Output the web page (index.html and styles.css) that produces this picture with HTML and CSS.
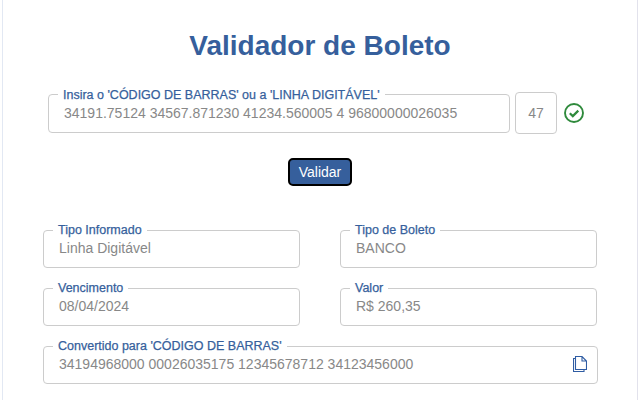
FILE: index.html
```html
<!DOCTYPE html>
<html lang="pt-BR">
<head>
<meta charset="utf-8">
<title>Validador de Boleto</title>
<link rel="stylesheet" href="styles.css">
</head>
<body>
<main class="card">
  <h1 class="title">Validador de Boleto</h1>
  <div class="entry">
    <fieldset class="field field-entry">
      <legend>Insira o 'CÓDIGO DE BARRAS' ou a 'LINHA DIGITÁVEL'</legend>
      <span class="value">34191.75124 34567.871230 41234.560005 4 96800000026035</span>
    </fieldset>
    <div class="count">47</div>
    <svg class="check" viewBox="0 0 20 20" width="20" height="20" aria-hidden="true">
      <circle cx="10" cy="10" r="9" fill="none" stroke="#2f8a3c" stroke-width="1.9"/>
      <path d="M5.8 10.2 8.8 13.1 14.3 7.6" fill="none" stroke="#2f8a3c" stroke-width="2.2"/>
    </svg>
  </div>
  <div class="actions"><button class="button" type="button">Validar</button></div>
  <div class="results">
    <fieldset class="field"><legend>Tipo Informado</legend><span class="value">Linha Digitável</span></fieldset>
    <fieldset class="field"><legend>Tipo de Boleto</legend><span class="value">BANCO</span></fieldset>
    <fieldset class="field"><legend>Vencimento</legend><span class="value">08/04/2024</span></fieldset>
    <fieldset class="field"><legend>Valor</legend><span class="value">R$ 260,35</span></fieldset>
  </div>
  <fieldset class="field field-wide">
    <legend>Convertido para 'CÓDIGO DE BARRAS'</legend>
    <div class="wide-row">
      <span class="value">34194968000 00026035175 12345678712 34123456000</span>
      <svg class="copy" viewBox="0 0 14 16" width="14" height="16" aria-hidden="true">
        <path d="M2.5 .5H9L13.5 5V13.5H2.5Z M9 .5V5H13.5" fill="none" stroke="#2f5ca3" stroke-width="1.1"/>
        <path d="M2.5 2.5H.5V15.5H11V13.5" fill="none" stroke="#2f5ca3" stroke-width="1.1"/>
      </svg>
    </div>
  </fieldset>
</main>
</body>
</html>
```
FILE: styles.css
```css
* { box-sizing: border-box; }
html, body { margin: 0; height: 100%; background: #fff; overflow: hidden; }
body { font-family: "Liberation Sans", Arial, sans-serif; }
.card {
  width: 636px;
  height: 400px;
  margin-left: 2px;
  border-left: 1px solid #e2e8f3;
  border-right: 1px solid #e2e2ec;
  padding: 0 40px;
}
.title {
  margin: 0;
  padding-top: 30px;
  height: 84px;
  font-size: 28px;
  line-height: 32px;
  font-weight: 700;
  color: #365f9c;
  text-align: center;
}
.entry { display: flex; align-items: center; margin-left: 5px; height: 52px; }
.field {
  margin: 0;
  min-width: 0;
  border: 1px solid #ccc;
  border-radius: 4px;
  padding: 0 15px;
  height: 45px;
}
.field legend {
  padding: 0 5px;
  margin-left: -6px;
  font-size: 12.5px;
  line-height: 14px;
  color: #365f9c;
  -webkit-text-stroke: 0.25px #365f9c;
}
.value { display: block; font-size: 14px; line-height: 22px; color: #888; }
.field-entry { width: 462px; }
.count {
  width: 42px;
  height: 42px;
  margin-left: 5px;
  margin-top: 6px;
  border: 1px solid #ccc;
  border-radius: 4px;
  font-size: 14px;
  line-height: 40px;
  text-align: center;
  color: #888;
}
.check { margin-left: 7px; margin-top: 6px; }
.actions { display: flex; justify-content: center; margin-top: 22px; }
.button {
  width: 64px;
  height: 28px;
  padding: 0;
  border: 2px solid #000;
  border-radius: 5px;
  background: #365f9c;
  color: #fff;
  font: 14px/24px "Liberation Sans", Arial, sans-serif;
}
.results {
  display: grid;
  grid-template-columns: 257px 257px;
  column-gap: 40px;
  row-gap: 13px;
  margin-top: 37px;
}
.field-wide { width: 555px; margin-top: 13px; padding-right: 10px; }
.wide-row { display: flex; justify-content: space-between; align-items: center; height: 22px; }
.copy { flex: none; }
```
